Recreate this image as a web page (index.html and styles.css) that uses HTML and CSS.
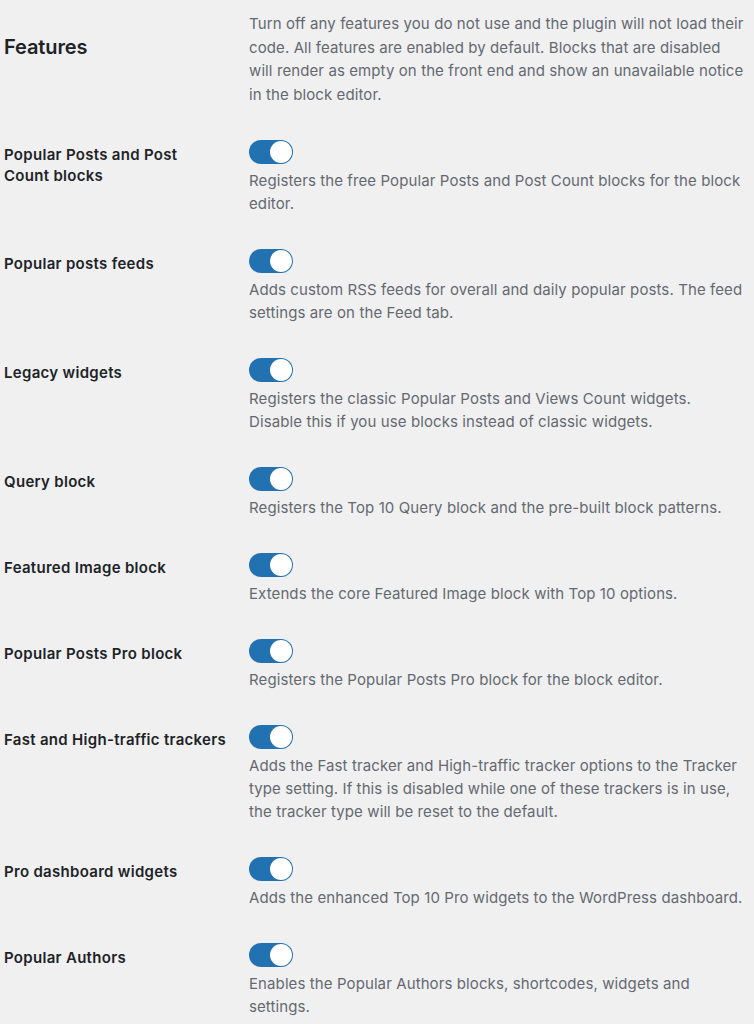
FILE: index.html
```html
<!DOCTYPE html>
<html lang="en">
<head>
<meta charset="utf-8">
<title>Features</title>
<link rel="stylesheet" href="styles.css">
</head>
<body>
<div class="page">
  <div class="intro">
    <h2 class="intro-title">Features</h2>
    <p class="intro-text">Turn off any features you do not use and the plugin will not load their code. All features are enabled by default. Blocks that are disabled will render as empty on the front end and show an unavailable notice in the block editor.</p>
  </div>

  <div class="row">
    <div class="label">Popular Posts and Post Count blocks</div>
    <div class="field">
      <span class="toggle"><span class="knob"></span></span>
      <p class="desc">Registers the free Popular Posts and Post Count blocks for the block editor.</p>
    </div>
  </div>

  <div class="row">
    <div class="label">Popular posts feeds</div>
    <div class="field">
      <span class="toggle"><span class="knob"></span></span>
      <p class="desc">Adds custom RSS feeds for overall and daily popular posts. The feed settings are on the Feed tab.</p>
    </div>
  </div>

  <div class="row">
    <div class="label">Legacy widgets</div>
    <div class="field">
      <span class="toggle"><span class="knob"></span></span>
      <p class="desc">Registers the classic Popular Posts and Views Count widgets. Disable this if you use blocks instead of classic widgets.</p>
    </div>
  </div>

  <div class="row">
    <div class="label">Query block</div>
    <div class="field">
      <span class="toggle"><span class="knob"></span></span>
      <p class="desc">Registers the Top 10 Query block and the pre-built block patterns.</p>
    </div>
  </div>

  <div class="row">
    <div class="label">Featured Image block</div>
    <div class="field">
      <span class="toggle"><span class="knob"></span></span>
      <p class="desc">Extends the core Featured Image block with Top 10 options.</p>
    </div>
  </div>

  <div class="row">
    <div class="label">Popular Posts Pro block</div>
    <div class="field">
      <span class="toggle"><span class="knob"></span></span>
      <p class="desc">Registers the Popular Posts Pro block for the block editor.</p>
    </div>
  </div>

  <div class="row">
    <div class="label label-nowrap">Fast and High-traffic trackers</div>
    <div class="field">
      <span class="toggle"><span class="knob"></span></span>
      <p class="desc">Adds the Fast tracker and High-traffic tracker options to the Tracker type setting. If this is disabled while one of these trackers is in use, the tracker type will be reset to the default.</p>
    </div>
  </div>

  <div class="row">
    <div class="label">Pro dashboard widgets</div>
    <div class="field">
      <span class="toggle"><span class="knob"></span></span>
      <p class="desc">Adds the enhanced Top 10 Pro widgets to the WordPress dashboard.</p>
    </div>
  </div>

  <div class="row">
    <div class="label">Popular Authors</div>
    <div class="field">
      <span class="toggle"><span class="knob"></span></span>
      <p class="desc">Enables the Popular Authors blocks, shortcodes, widgets and settings.</p>
    </div>
  </div>
</div>
</body>
</html>
```

FILE: styles.css
```css
html, body {
  margin: 0;
  padding: 0;
  background: #f0f0f1;
}

body {
  font-family: Inter, "Noto Sans", "Liberation Sans", sans-serif;
  color: #1d2327;
  -webkit-font-smoothing: antialiased;
}

.page {
  padding: 12px 0 0 4px;
}

.intro,
.row {
  display: grid;
  grid-template-columns: 245px 495px;
}

.intro {
  padding-bottom: 17px;
}

.intro-title {
  margin: 23px 0 0;
  font-size: 20px;
  line-height: 24px;
  font-weight: 600;
  letter-spacing: -0.1px;
}

.intro-text {
  margin: 0;
  font-size: 15px;
  line-height: 23.5px;
  letter-spacing: 0.1px;
  color: #646970;
}

.row {
  padding: 17px 0;
}

.label {
  margin-top: 4px;
  max-width: 210px;
  font-size: 15px;
  line-height: 21px;
  font-weight: 600;
  letter-spacing: 0.3px;
}

.label-nowrap {
  white-space: nowrap;
}

.field {
  display: flex;
  flex-direction: column;
  align-items: flex-start;
  gap: 5px;
}

.toggle {
  position: relative;
  display: block;
  width: 44px;
  height: 24px;
  border-radius: 12px;
  background: #2271b1;
}

.knob {
  position: absolute;
  top: 1px;
  right: 1px;
  width: 22px;
  height: 22px;
  border-radius: 50%;
  background: #fff;
}

.desc {
  margin: 0;
  font-size: 15px;
  line-height: 23px;
  letter-spacing: 0.1px;
  color: #646970;
}
```
